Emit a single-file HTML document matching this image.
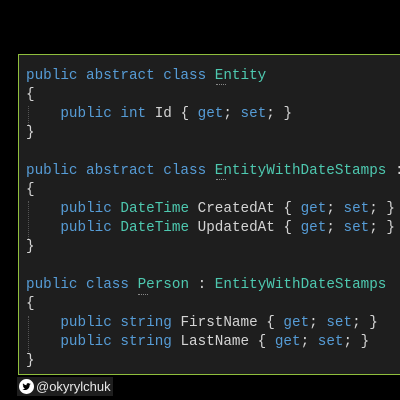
<!DOCTYPE html>
<html><head><style>
html,body{margin:0;padding:0;background:#000;width:400px;height:400px;overflow:hidden}
.box{position:absolute;left:18px;top:54px;width:400px;height:321px;border:1.5px solid #8fbe3c;background:#1e1e1e;box-sizing:border-box}
pre{position:absolute;left:26px;top:67px;margin:0;font-family:"Liberation Mono",monospace;font-size:14.3px;line-height:19px;color:#d4d4d4;white-space:pre}
.k{color:#569cd6}.t{color:#4ec9b0}
.g{position:absolute;left:28px;width:0;border-left:1px dotted #555}
.d{position:absolute;width:10px;border-top:1px dotted #888}
.tw{position:absolute;left:17px;top:377px;width:96px;height:19px;background:#1e1e1e;color:#e8e8e8;font-family:"Liberation Sans",sans-serif;font-size:13px;line-height:19px}
.tw span{position:absolute;left:19px;top:0}
</style></head><body>
<div class="box"></div>
<div class="g" style="top:106px;height:19px"></div>
<div class="g" style="top:201px;height:38px"></div>
<div class="g" style="top:316px;height:38px"></div>
<div class="d" style="left:216px;top:84px"></div>
<div class="d" style="left:216px;top:179px"></div>
<div class="d" style="left:138px;top:294px"></div>
<pre><span class="k">public abstract class</span> <span class="t">Entity</span>
{
    <span class="k">public int</span> Id { <span class="k">get</span>; <span class="k">set</span>; }
}

<span class="k">public abstract class</span> <span class="t">EntityWithDateStamps</span> :
{
    <span class="k">public</span> <span class="t">DateTime</span> CreatedAt { <span class="k">get</span>; <span class="k">set</span>; }
    <span class="k">public</span> <span class="t">DateTime</span> UpdatedAt { <span class="k">get</span>; <span class="k">set</span>; }
}

<span class="k">public class</span> <span class="t">Person</span> : <span class="t">EntityWithDateStamps</span>
{
    <span class="k">public string</span> FirstName { <span class="k">get</span>; <span class="k">set</span>; }
    <span class="k">public string</span> LastName { <span class="k">get</span>; <span class="k">set</span>; }
}</pre>
<div class="tw"><svg style="position:absolute;left:2px;top:2px" width="15" height="15" viewBox="0 0 16 16"><circle cx="8" cy="8" r="8" fill="#fff"/><path d="M12.5 5.2c-.3.1-.7.2-1 .3.4-.2.6-.6.8-1-.4.2-.8.4-1.2.5a1.8 1.8 0 0 0-3.1 1.6C6.5 6.5 5.2 5.8 4.3 4.7c-.5.8-.2 1.9.6 2.4-.3 0-.6-.1-.8-.2 0 .9.6 1.6 1.4 1.8-.3.1-.6.1-.8 0 .2.7.9 1.3 1.7 1.3A3.6 3.6 0 0 1 3.7 11c3.4 2.1 7.8-.4 7.7-4.8.4-.3.8-.6 1.1-1z" fill="#000"/></svg><span>@okyrylchuk</span></div>
</body></html>
